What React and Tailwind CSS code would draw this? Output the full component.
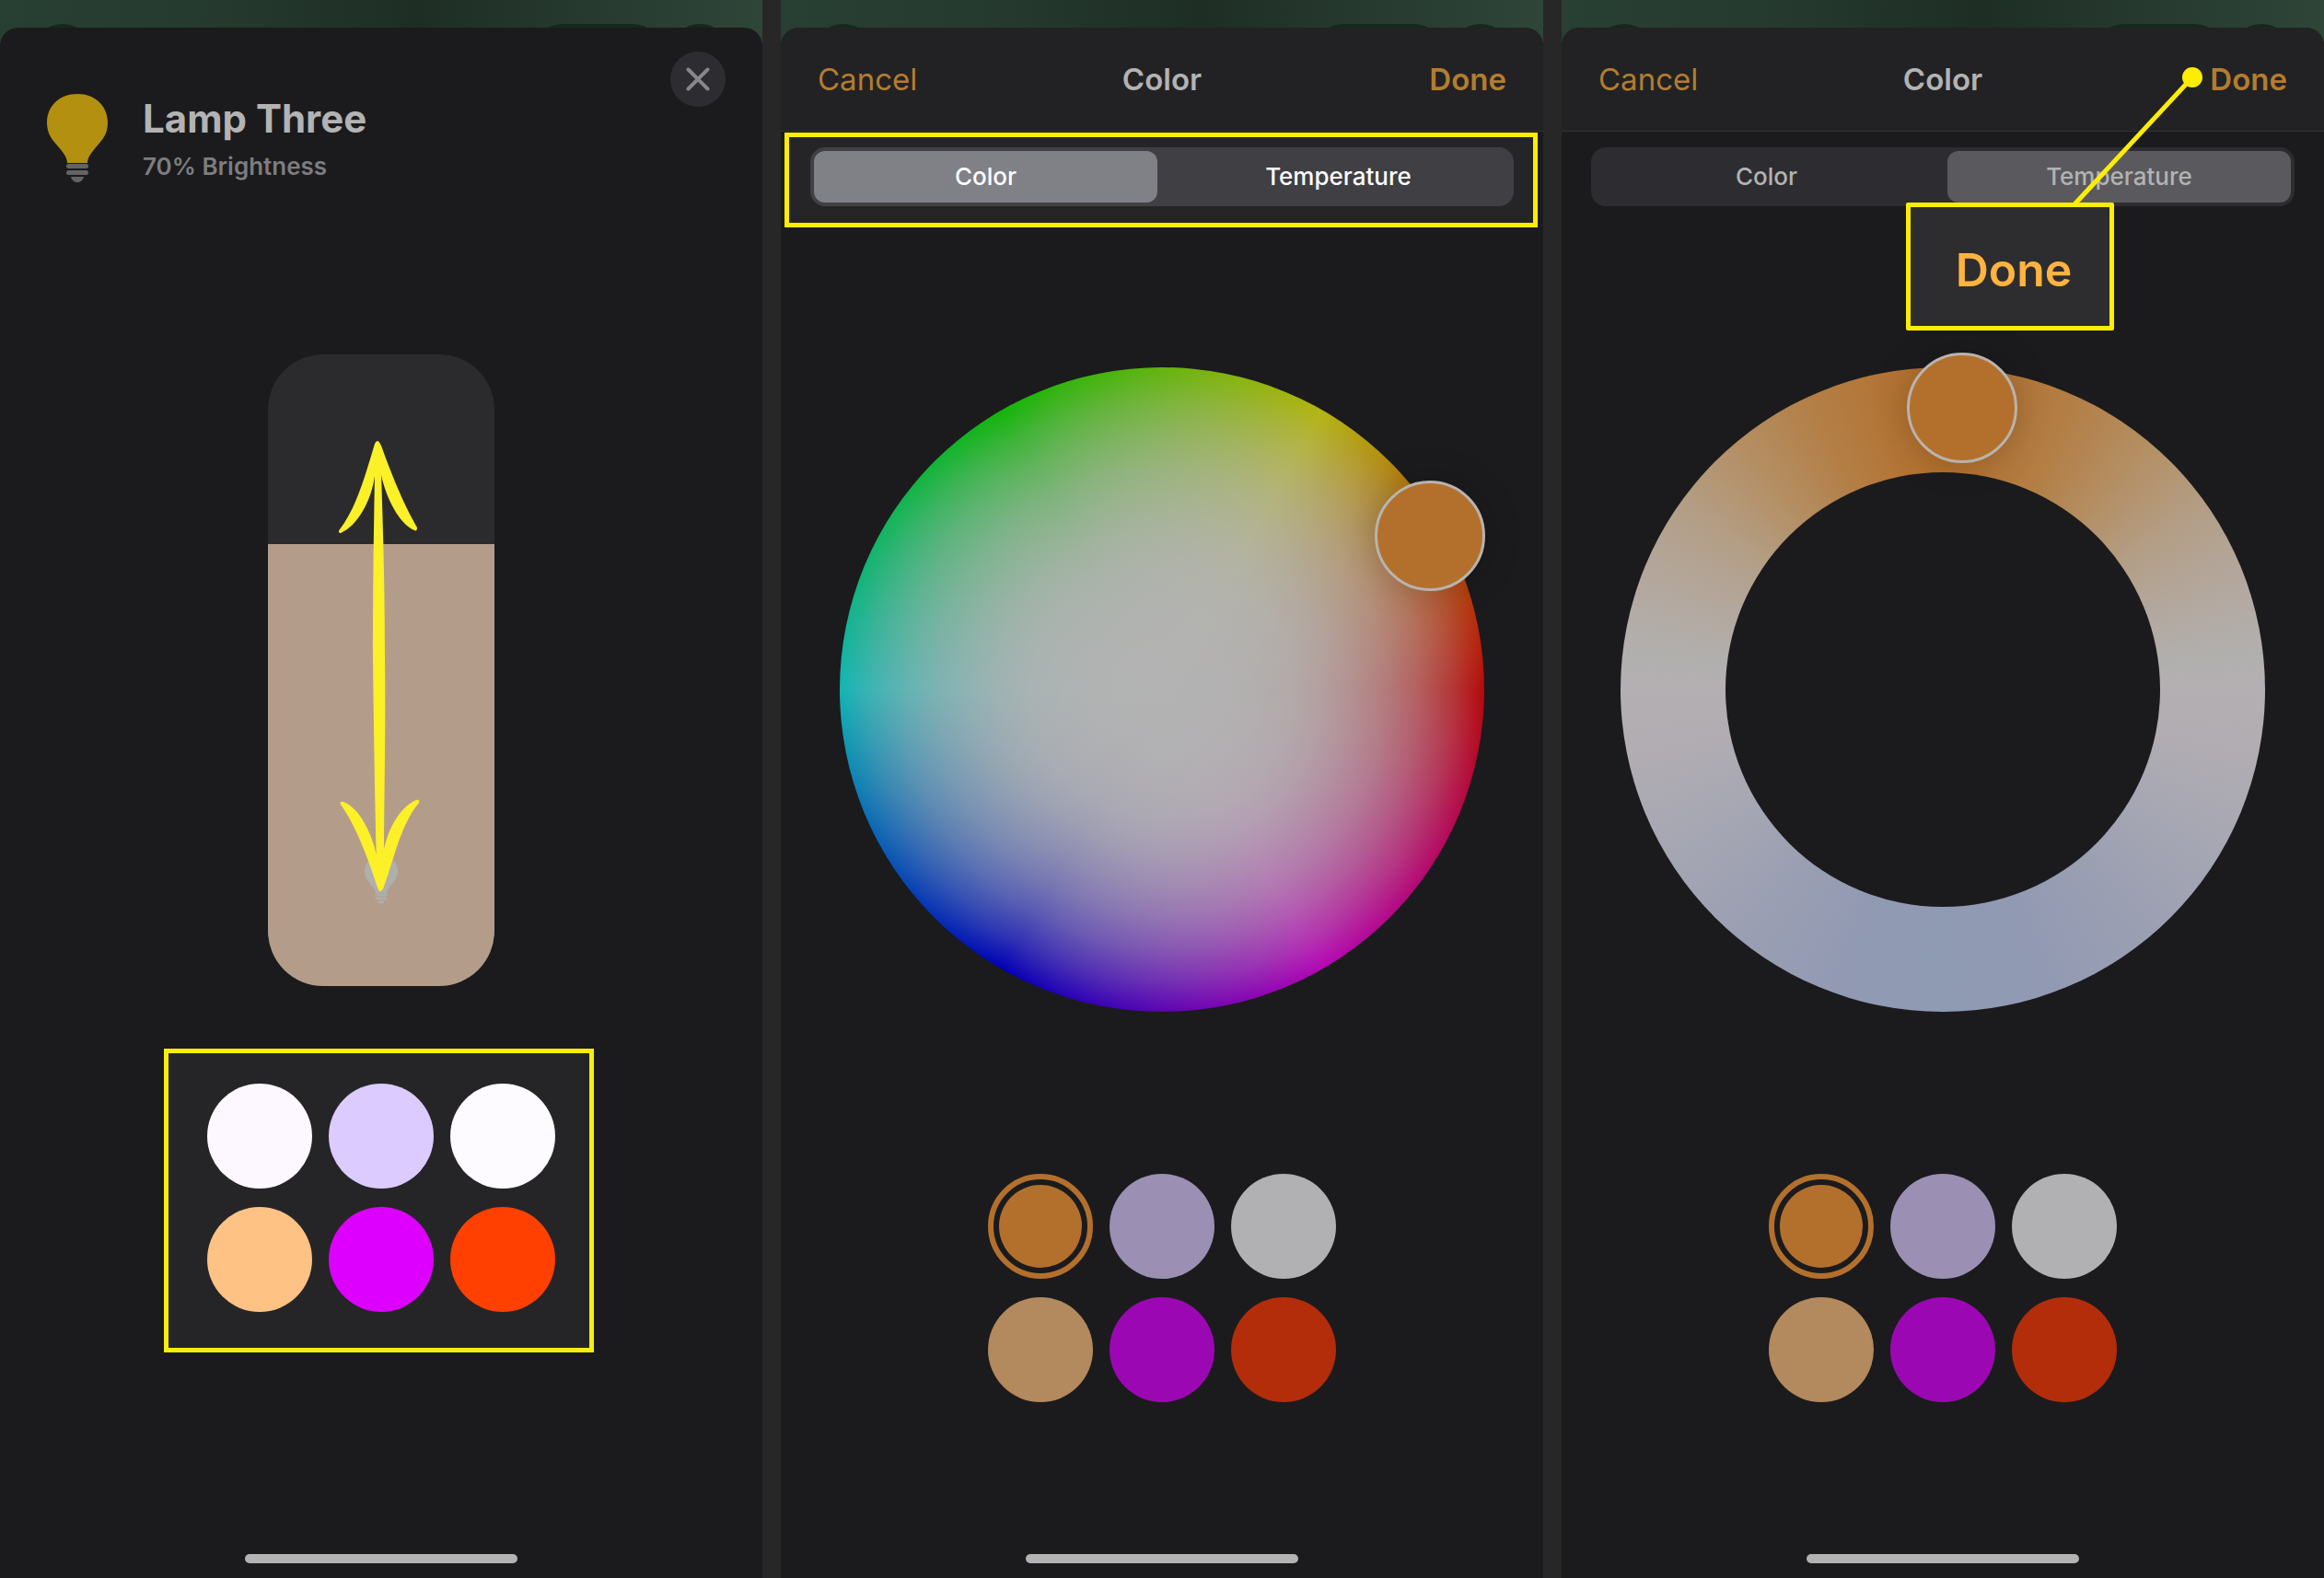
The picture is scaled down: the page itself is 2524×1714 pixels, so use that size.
import { useState } from 'react'

const brightSwatches = [
  { name: 'Soft white', bg: 'bg-[#fdf8ff]' },
  { name: 'Lavender', bg: 'bg-[#dccbff]' },
  { name: 'Cool white', bg: 'bg-[#fdfbff]' },
  { name: 'Peach', bg: 'bg-[#ffc285]' },
  { name: 'Magenta', bg: 'bg-[#dd00ff]' },
  { name: 'Red orange', bg: 'bg-[#ff4000]' },
]

const dimSwatches = [
  { name: 'Orange', bg: 'bg-[#b3702d]', selected: true },
  { name: 'Lavender', bg: 'bg-[#9b8fb4]' },
  { name: 'White', bg: 'bg-[#b1b0b2]' },
  { name: 'Peach', bg: 'bg-[#b3895e]' },
  { name: 'Magenta', bg: 'bg-[#9b08b3]' },
  { name: 'Red orange', bg: 'bg-[#b32d0a]' },
]

function Bulb({ className, glass, base }) {
  return (
    <svg viewBox="0 0 66 96" className={className} aria-hidden="true">
      <path
        fill={glass}
        d="M33 0C14 0 0 13 0 31c0 12 5 18 12 26 6 7 10 12 10 18h22c0-6 4-11 10-18 7-8 12-14 12-26C66 13 52 0 33 0z"
      />
      <rect x="21" y="76" width="24" height="5" rx="2.5" fill={base} />
      <rect x="21" y="83" width="24" height="5" rx="2.5" fill={base} />
      <path fill={base} d="M26 90h14c-1 4-4 6-7 6s-6-2-7-6z" />
    </svg>
  )
}

function Swatches({ items }) {
  return (
    <div className="grid grid-cols-[repeat(3,114px)] gap-x-[18px] gap-y-5">
      {items.map((item) =>
        item.selected ? (
          <button
            key={item.name}
            type="button"
            aria-label={item.name}
            aria-pressed="true"
            className="size-[114px] rounded-full border-6 border-[#b3702d] p-1.5"
          >
            <span className={`block size-full rounded-full ${item.bg}`} />
          </button>
        ) : (
          <button
            key={item.name}
            type="button"
            aria-label={item.name}
            className={`size-[114px] rounded-full ${item.bg}`}
          />
        )
      )}
    </div>
  )
}

function Phone({ children }) {
  return (
    <section className="relative flex min-w-0 flex-col overflow-hidden bg-[#1b1b1d] pt-[30px]">
      <div className="absolute inset-x-0 top-0 h-14 overflow-hidden bg-[linear-gradient(90deg,#283f33,#263b2f_25%,#1e2e25_55%,#26392f_75%,#2e4538)]">
        <span className="absolute top-[26px] left-[34px] size-17 rounded-full bg-[#14291b]" />
        <span className="absolute top-[26px] right-[107px] h-17 w-36 rounded-full bg-[#14291b]" />
        <span className="absolute top-[26px] right-[34px] size-17 rounded-full bg-[#14291b]" />
      </div>
      <div className="relative flex flex-1 flex-col overflow-hidden rounded-t-[20px] bg-[#1b1b1d] pb-4">
        {children}
        <div className="mt-auto h-2.5 w-[296px] self-center rounded-full bg-[#b3b3b3]" />
      </div>
    </section>
  )
}

function NavBar() {
  return (
    <header className="grid h-[113px] grid-cols-3 items-center border-b border-[#323234] bg-[#222224] px-10 text-[33px] leading-10">
      <button type="button" className="justify-self-start text-[#b37d2f]">
        Cancel
      </button>
      <h2 className="text-center font-semibold text-[#b3b3b3]">Color</h2>
      <button type="button" className="justify-self-end font-semibold text-[#b37d2f]">
        Done
      </button>
    </header>
  )
}

function Segments({ initial, bright }) {
  const [active, setActive] = useState(initial)
  const selectedBg = bright ? 'bg-[#808087]' : 'bg-[#5a5a5e]'

  return (
    <div
      role="tablist"
      className={`grid h-16 grid-cols-2 gap-2.5 rounded-2xl p-1 text-[26px] leading-8 font-medium ${
        bright ? 'bg-[#3f3f44] text-white' : 'bg-[#2d2d31] text-[#b3b3b3]'
      }`}
    >
      {['Color', 'Temperature'].map((label) => (
        <button
          key={label}
          type="button"
          role="tab"
          aria-selected={active === label}
          onClick={() => setActive(label)}
          className={`rounded-xl ${active === label ? selectedBg : ''}`}
        >
          {label}
        </button>
      ))}
    </div>
  )
}

function BrightnessSlider() {
  const [level, setLevel] = useState(70)

  return (
    <div className="relative mt-[187px] h-[686px] w-[246px] self-center">
      <div className="flex size-full flex-col justify-end overflow-hidden rounded-[60px] bg-[#2b2b2d]">
        <div className="bg-[#b39d8a]" style={{ height: `${level}%` }} />
      </div>
      <Bulb
        className="absolute bottom-[89px] left-[105px] h-[53px] w-9"
        glass="#b0aeae"
        base="#b0aeae"
      />
      <input
        type="range"
        aria-label="Brightness"
        min="0"
        max="100"
        value={level}
        onChange={(event) => setLevel(Number(event.target.value))}
        className="absolute inset-0 size-full opacity-0 [direction:rtl] [writing-mode:vertical-lr]"
      />
      <svg
        viewBox="0 0 246 686"
        className="pointer-events-none absolute inset-0 size-full"
        fill="#fcf029"
        aria-hidden="true"
      >
        <path d="M116 128C115 190 114 250 114 330C115 410 116 480 118 556L126 556C126 480 128 420 127 330C127 250 125 190 123 128Z" />
        <path d="M119 94C120 94 121 95 123 99C134 130 147 162 162 188C162 191 161 192 159 191C143 184 129 158 123 131L116 132C112 160 97 186 79 194C77 194 76 192 78 190C96 167 106 130 116 97C117 95 118 94 119 94Z" />
        <path d="M122 583C121 583 120 582 119 579C108 545 95 511 79 489C78 486 79 485 82 486C100 493 113 520 119 548L125 545C128 517 144 491 161 484C164 483 165 485 164 487C144 511 137 548 126 578C125 581 123 583 122 583Z" />
      </svg>
    </div>
  )
}

function Knob({ label, className }) {
  return (
    <button
      type="button"
      aria-label={label}
      className={`absolute size-[120px] rounded-full border-3 border-[#b8b3ae] bg-[#b3702d] shadow-[0_0_40px_rgba(0,0,0,0.2)] ${className}`}
    />
  )
}

function LampScreen() {
  return (
    <Phone>
      <header className="flex items-start pt-[72px] pl-[51px]">
        <Bulb className="h-24 w-[66px]" glass="#b3900f" base="#636365" />
        <div className="ml-[38px] pt-0.5">
          <h1 className="text-[42px] leading-[50px] font-bold text-[#b3b3b3]">Lamp Three</h1>
          <p className="mt-[11px] text-[26px] leading-8 font-semibold text-[#7d7d80]">
            70% Brightness
          </p>
        </div>
      </header>
      <button
        type="button"
        aria-label="Close"
        className="absolute top-[26px] right-10 flex size-[60px] items-center justify-center rounded-full bg-[#2d2d31]"
      >
        <svg viewBox="0 0 26 26" className="size-[26px]" aria-hidden="true">
          <path d="M2.5 2.5l21 21M23.5 2.5l-21 21" stroke="#87878b" strokeWidth="4" strokeLinecap="round" />
        </svg>
      </button>
      <BrightnessSlider />
      <div className="mt-[68px] mr-[5px] self-center border-5 border-[#f7ee0c] bg-[#252527] pt-[33px] pr-[37px] pb-[39px] pl-[42px]">
        <Swatches items={brightSwatches} />
      </div>
    </Phone>
  )
}

function ColorScreen() {
  return (
    <Phone>
      <NavBar />
      <div className="mt-px mr-1.5 ml-1 border-5 border-[#ffed00] bg-[#252528] pt-[11px] pr-[21px] pb-[18px] pl-[23px]">
        <Segments initial="Color" bright />
      </div>
      <div className="relative mt-[152px] size-[700px] self-center rounded-full bg-[radial-gradient(closest-side,#b3b3b3,rgb(179_179_179/0.99)_20%,rgb(179_179_179/0.97)_30%,rgb(179_179_179/0.94)_40%,rgb(179_179_179/0.88)_50%,rgb(179_179_179/0.78)_60%,rgb(179_179_179/0.66)_70%,rgb(179_179_179/0.49)_80%,rgb(179_179_179/0.27)_90%,rgb(179_179_179/0)),conic-gradient(from_90deg,#b40a0a,#b406b4,#0000b4,#12b4b4,#12b40a,#b4b410,#b40a0a)]">
        <Knob label="Color picker" className="top-[123px] left-[581px]" />
      </div>
      <div className="mt-44 mb-8 self-center">
        <Swatches items={dimSwatches} />
      </div>
    </Phone>
  )
}

function TemperatureScreen() {
  return (
    <Phone>
      <NavBar />
      <div className="px-8 pt-[17px] pb-[23px]">
        <Segments initial="Temperature" />
      </div>
      <div className="relative mt-[152px] size-[700px] self-center rounded-full bg-[conic-gradient(#b3702c,#b37435_10deg,#b37e45_24deg,#b48f64_40deg,#b39f88_56deg,#b3a9a1_72deg,#b1b0af_84deg,#b4afb1_88deg,#b2adb2_100deg,#a6a7b3_120deg,#9b9fb2_140deg,#929ab3_160deg,#8f9ab3_180deg,#929ab3_200deg,#9b9fb2_220deg,#a6a7b3_240deg,#b2adb2_260deg,#b4afb1_272deg,#b1b0af_276deg,#b3a9a1_288deg,#b39f88_304deg,#b48f64_320deg,#b37e45_336deg,#b37435_350deg,#b3702c)] p-[114px]">
        <div className="size-full rounded-full bg-[#1b1b1d]" />
        <Knob label="Temperature picker" className="-top-4 left-[311px]" />
      </div>
      <div className="mt-44 mb-8 self-center">
        <Swatches items={dimSwatches} />
      </div>

      {/* magnified Done callout */}
      <svg
        viewBox="0 0 142 152"
        className="pointer-events-none absolute top-[43px] right-[132px] h-[152px] w-[142px]"
        aria-hidden="true"
      >
        <circle cx="131" cy="11" r="11" fill="#ffed00" />
        <path d="M131 11L3 149" stroke="#ffed00" strokeWidth="5" />
      </svg>
      <div className="absolute top-[190px] right-[228px] flex h-[139px] w-[226px] items-center justify-center rounded-xs border-5 border-[#ffed00] bg-[#2d2d2f] pt-1.5 pl-2 text-[50px] leading-[60px] font-semibold text-[#ffb340]">
        Done
      </div>
    </Phone>
  )
}

export default function App() {
  return (
    <main className="grid min-h-screen grid-cols-3 gap-5 bg-[#272727] font-['Inter','Liberation_Sans',sans-serif]">
      <LampScreen />
      <ColorScreen />
      <TemperatureScreen />
    </main>
  )
}
